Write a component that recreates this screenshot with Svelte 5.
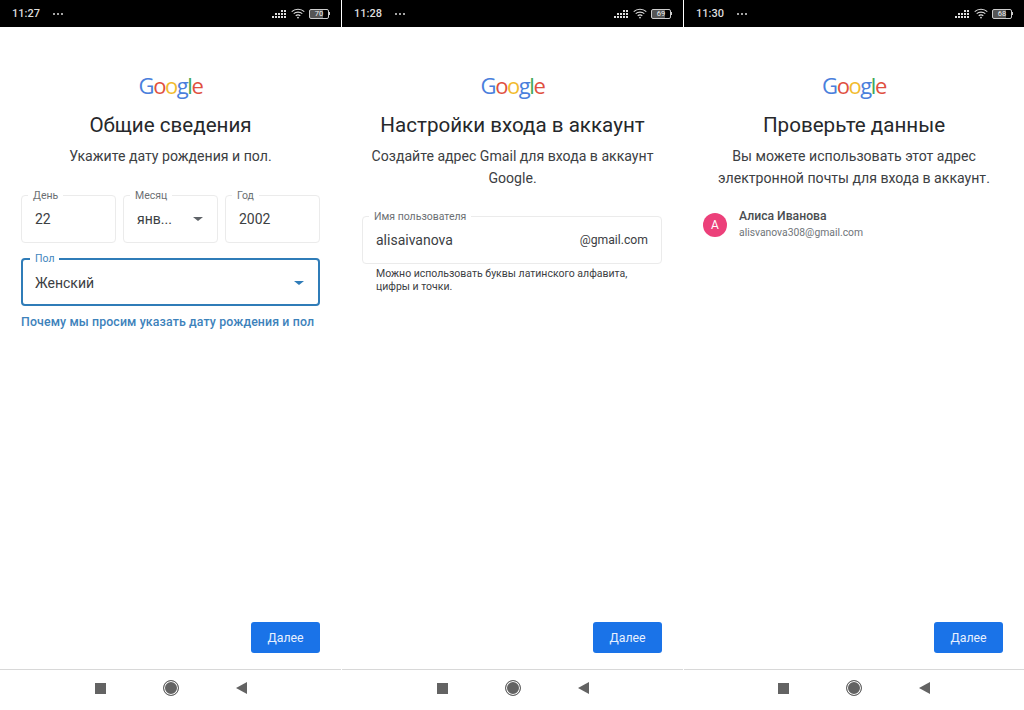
<script>
	const screens = [
		{ time: '11:27', battery: 70, title: 'Общие сведения', kind: 'about' },
		{ time: '11:28', battery: 69, title: 'Настройки входа в аккаунт', kind: 'login' },
		{ time: '11:30', battery: 68, title: 'Проверьте данные', kind: 'review' }
	];
	const logo = [
		['G', '#4a7fdc'],
		['o', '#e0503f'],
		['o', '#f2bb2e'],
		['g', '#4a7fdc'],
		['l', '#3fa757'],
		['e', '#e0503f']
	];
</script>

<div class="page">
	{#each screens as screen (screen.time)}
		<section class="phone">
			<header class="status">
				<span class="time">{screen.time}</span>
				<span class="dots">
					<i></i><i></i><i></i>
				</span>
				<span class="status-icons">
					<svg width="14" height="10" viewBox="0 0 14 10" fill="#ddd">
						<rect x="0" y="7" width="2" height="2" />
						<rect x="3" y="7" width="2" height="2" />
						<rect x="6" y="7" width="2" height="2" />
						<rect x="9" y="7" width="2" height="2" />
						<rect x="12" y="7" width="2" height="2" />
						<rect x="3" y="4" width="2" height="2" />
						<rect x="6" y="4" width="2" height="2" />
						<rect x="9" y="4" width="2" height="2" />
						<rect x="12" y="4" width="2" height="2" />
						<rect x="9" y="1" width="2" height="2" />
						<rect x="12" y="1" width="2" height="2" />
					</svg>
					<svg width="14" height="11" viewBox="0 0 14 11" fill="none" stroke="#ddd" stroke-width="1.1">
						<path d="M0.7 3.6C4.2 0.4 9.8 0.4 13.3 3.6" />
						<path d="M2.7 5.7C5.1 3.6 8.9 3.6 11.3 5.7" />
						<path d="M4.7 7.7C6 6.7 8 6.7 9.3 7.7" />
						<circle cx="7" cy="9.6" r="0.9" fill="#ddd" stroke="none" />
					</svg>
					<span class="battery"><span class="level">{screen.battery}</span></span>
					<span class="nub"></span>
				</span>
			</header>

			<main class="content">
				<div class="logo">
					{#each logo as [letter, colour]}
						<span style="color: {colour}">{letter}</span>
					{/each}
				</div>
				<h1>{screen.title}</h1>

				{#if screen.kind === 'about'}
					<p class="lead">Укажите дату рождения и пол.</p>
					<div class="date-row">
						<div class="field">
							<span class="label">День</span>
							<span class="value">22</span>
						</div>
						<div class="field">
							<span class="label">Месяц</span>
							<span class="value">янв...</span>
							<span class="arrow"></span>
						</div>
						<div class="field">
							<span class="label">Год</span>
							<span class="value">2002</span>
						</div>
					</div>
					<div class="field focused">
						<span class="label">Пол</span>
						<span class="value">Женский</span>
						<span class="arrow"></span>
					</div>
					<div class="why">Почему мы просим указать дату рождения и пол</div>
				{:else if screen.kind === 'login'}
					<p class="lead">Создайте адрес Gmail для входа в аккаунт Google.</p>
					<div class="field username">
						<span class="label">Имя пользователя</span>
						<span class="value">alisaivanova</span>
						<span class="suffix">@gmail.com</span>
					</div>
					<p class="hint">Можно использовать буквы латинского алфавита, цифры и точки.</p>
				{:else}
					<p class="lead">Вы можете использовать этот адрес электронной почты для входа в аккаунт.</p>
					<div class="account">
						<div class="avatar">А</div>
						<div>
							<div class="name">Алиса Иванова</div>
							<div class="email">alisvanova308@gmail.com</div>
						</div>
					</div>
				{/if}

				<div class="actions">
					<button>Далее</button>
				</div>
			</main>

			<nav class="nav">
				<span class="square"></span>
				<span class="home"></span>
				<span class="back"></span>
			</nav>
		</section>
	{/each}
</div>

<style>
	:global(body) {
		margin: 0;
		background: #fff;
	}

	.page {
		display: grid;
		grid-template-columns: 341px 341px 340px;
		column-gap: 1px;
		width: 1024px;
		height: 710px;
		overflow: hidden;
		font-family: Roboto, 'Liberation Sans', sans-serif;
		color: #3c4043;
	}

	.phone {
		display: flex;
		flex-direction: column;
		height: 710px;
		min-width: 0;
	}

	.status {
		display: flex;
		align-items: center;
		height: 27px;
		padding: 0 11px 0 12px;
		background: #000;
		color: #ddd;
		font-size: 11px;
		font-weight: 500;
	}

	.dots {
		display: flex;
		gap: 2px;
		margin-left: 13px;
	}

	.dots i {
		width: 2px;
		height: 2px;
		border-radius: 50%;
		background: #ddd;
	}

	.status-icons {
		display: flex;
		align-items: center;
		gap: 5px;
		margin-left: auto;
	}

	.status-icons svg {
		position: relative;
		left: 1px;
	}

	.battery {
		display: flex;
		align-items: center;
		justify-content: center;
		box-sizing: border-box;
		width: 20px;
		height: 10px;
		border: 1px solid #ccc;
		border-radius: 2px;
		background: linear-gradient(90deg, #555 70%, transparent 70%);
	}

	.level {
		color: #eee;
		font-size: 7.5px;
		line-height: 8px;
		font-weight: 400;
	}

	.nub {
		width: 1px;
		height: 3px;
		margin-left: -5px;
		background: #ccc;
	}

	.content {
		flex: 1;
		display: flex;
		flex-direction: column;
		min-height: 0;
		padding: 0 21px 16px;
	}

	.logo {
		align-self: center;
		margin-top: 42px;
		height: 33px;
		font-family: 'Open Sans', sans-serif;
		font-size: 22px;
		font-weight: 500;
		line-height: 33px;
		letter-spacing: -1.4px;
	}

	h1 {
		margin: 7px 0 0;
		font-size: 20.6px;
		line-height: 32px;
		font-weight: 400;
		text-align: center;
		color: #26282b;
	}

	.lead {
		margin: 4px 0 0;
		font-size: 14.1px;
		line-height: 22px;
		text-align: center;
		color: #3c4043;
	}

	.date-row {
		display: grid;
		grid-template-columns: repeat(3, 95px);
		column-gap: 7px;
		margin-top: 28px;
		margin-bottom: 15px;
	}

	.field {
		position: relative;
		display: flex;
		align-items: center;
		box-sizing: border-box;
		height: 48px;
		padding: 0 13px;
		border: 1px solid #ebebeb;
		border-radius: 4px;
	}

	.label {
		position: absolute;
		top: -6px;
		left: 6px;
		padding: 0 5px;
		background: #fff;
		font-size: 10.5px;
		line-height: 12px;
		color: #6b6f73;
	}

	.value {
		font-size: 14px;
		color: #3c4043;
	}

	.arrow {
		margin-left: auto;
		margin-right: 1px;
		border-top: 4px solid #5f6368;
		border-left: 5px solid transparent;
		border-right: 5px solid transparent;
	}

	.focused {
		border: 2px solid #2f7cb8;
		height: 48px;
		padding: 1px 12px 0;
	}

	.focused .label {
		top: -7px;
		left: 7px;
		color: #3f86bd;
	}

	.focused .arrow {
		border-top-color: #2f7cb8;
		margin-right: 2px;
	}

	.why {
		margin-top: 8px;
		font-size: 12.35px;
		line-height: 16px;
		font-weight: 500;
		letter-spacing: 0.12px;
		color: #3d82bb;
		white-space: nowrap;
	}

	.username {
		margin-top: 27px;
		margin-left: -1px;
		width: 300px;
	}

	.suffix {
		margin-left: auto;
		font-size: 12.2px;
		color: #3c4043;
	}

	.hint {
		margin: 3px 13px 0;
		font-size: 10.5px;
		line-height: 13px;
		color: #3c4043;
	}

	.account {
		display: flex;
		align-items: center;
		gap: 12px;
		margin-top: 19px;
		margin-left: -2px;
	}

	.avatar {
		display: flex;
		align-items: center;
		justify-content: center;
		width: 24px;
		height: 24px;
		border-radius: 50%;
		background: #ec407a;
		color: #fff;
		font-size: 12px;
	}

	.name {
		font-size: 12.2px;
		line-height: 16px;
		font-weight: 500;
		color: #4a4d50;
	}

	.email {
		font-size: 10.35px;
		line-height: 17px;
		color: #70757a;
	}

	.actions {
		display: flex;
		justify-content: flex-end;
		margin-top: auto;
	}

	button {
		width: 69px;
		height: 31px;
		padding: 1px 0 0;
		border: 0;
		border-radius: 3px;
		background: #1a73e8;
		color: #e8f0fe;
		font-family: inherit;
		font-size: 12.3px;
		font-weight: 400;
	}

	.nav {
		display: flex;
		align-items: center;
		justify-content: center;
		gap: 57px;
		box-sizing: border-box;
		height: 41px;
		padding-bottom: 4px;
		border-top: 1px solid #d8d8d8;
	}

	.square {
		width: 11px;
		height: 11px;
		background: #636363;
	}

	.home {
		box-sizing: border-box;
		width: 16px;
		height: 16px;
		border: 1px solid #636363;
		border-radius: 50%;
		background: #636363;
		box-shadow: inset 0 0 0 1px #fff;
	}

	.back {
		border-top: 6px solid transparent;
		border-bottom: 6px solid transparent;
		border-right: 11px solid #636363;
	}
</style>
